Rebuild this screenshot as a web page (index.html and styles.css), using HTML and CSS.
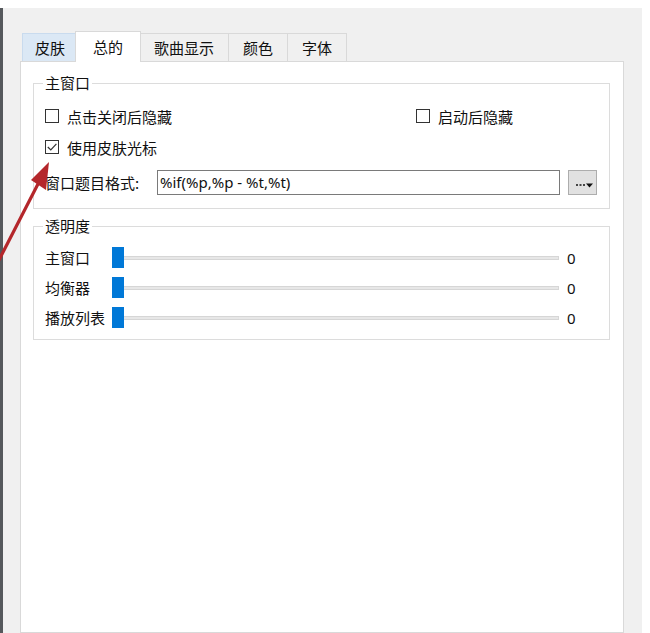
FILE: index.html
```html
<!DOCTYPE html>
<html lang="zh-CN">
<head>
  <meta charset="UTF-8">
  <meta name="viewport" content="width=device-width, initial-scale=1.0">
  <title>选项</title>
  <link rel="stylesheet" href="styles.css">
</head>
<body>

  <div class="window">
    <div class="tabs">
      <div class="tab hover">皮肤</div>
      <div class="tab active">总的</div>
      <div class="tab">歌曲显示</div>
      <div class="tab">颜色</div>
      <div class="tab">字体</div>
    </div>

    <div class="panel">
      <fieldset class="group">
        <legend>主窗口</legend>
        <div class="row check-row">
          <label class="check wide"><span class="box"></span>点击关闭后隐藏</label>
          <label class="check"><span class="box"></span>启动后隐藏</label>
        </div>
        <div class="row check-row second">
          <label class="check">
            <span class="box">
              <svg width="12" height="12" viewBox="0 0 12 12"><path d="M1.8 6 L4.8 9 L10.4 2.8" fill="none" stroke="#333" stroke-width="1.2"/></svg>
            </span>使用皮肤光标
          </label>
        </div>
        <div class="row format-row">
          <span class="field-label">窗口题目格式:</span>
          <div class="text-input">%if(%p,%p - %t,%t)</div>
          <div class="more-btn">
            <svg width="17" height="6" viewBox="0 0 17 6">
              <rect x="0" y="2" width="2" height="2" fill="#444"/>
              <rect x="3.5" y="2" width="2" height="2" fill="#444"/>
              <rect x="7" y="2" width="2" height="2" fill="#444"/>
              <path d="M10 1.5 H17 L13.5 5.5 Z" fill="#111"/>
            </svg>
          </div>
        </div>
      </fieldset>

      <fieldset class="group opacity">
        <legend>透明度</legend>
        <div class="row slider-row">
          <span class="slider-label">主窗口</span>
          <span class="thumb"></span>
          <span class="track"></span>
          <span class="value">0</span>
        </div>
        <div class="row slider-row">
          <span class="slider-label">均衡器</span>
          <span class="thumb"></span>
          <span class="track"></span>
          <span class="value">0</span>
        </div>
        <div class="row slider-row">
          <span class="slider-label">播放列表</span>
          <span class="thumb"></span>
          <span class="track"></span>
          <span class="value">0</span>
        </div>
      </fieldset>
    </div>
  </div>

  <!-- red pointer drawn over the dialog -->
  <svg class="arrow" width="60" height="270" viewBox="0 0 60 270">
    <line x1="-2" y1="262" x2="39" y2="182" stroke="#b4272b" stroke-width="3.2" stroke-linecap="round"/>
    <polygon points="49,162 31,180 46,190" fill="#b4272b"/>
  </svg>

</body>
</html>
```

FILE: styles.css
```css
body {
  margin: 0;
  background-color: #ffffff;
  font-family: "Noto Sans CJK SC", "Microsoft YaHei", sans-serif;
  font-size: 15px;
  color: #111;
}

.window {
  margin-top: 8px;
  width: 642px;
  height: 625px;
  box-sizing: border-box;
  background-color: #f0f0f0;
  border-left: 3px solid #55585c;
  padding: 25px 0 0 17px;
  display: flex;
  flex-direction: column;
}

/* tab strip */
.tabs {
  display: flex;
  align-items: flex-end;
  height: 28px;
  padding-left: 2px;
}

.tab {
  height: 28px;
  box-sizing: border-box;
  padding: 0 14px;
  border: 1px solid #d9d9d9;
  border-bottom: none;
  margin-right: -1px;
  background-color: #f0f0f0;
  display: flex;
  align-items: center;
  line-height: 1;
}

.tab.hover {
  background-color: #dbe8f5;
  border-color: #c9dbee;
  padding: 0 12px;
}

.tab.active {
  background-color: #ffffff;
  height: 31px;
  margin: 0 -2px -1px -2px;
  padding: 0 17px 2px;
  position: relative;
  z-index: 1;
}

.panel {
  flex: 1;
  background-color: #ffffff;
  border: 1px solid #d9d9d9;
  width: 604px;
  box-sizing: border-box;
}

/* group boxes */
.group {
  margin: 11px 13px 0 12px;
  padding: 11px 12px 13px 11px;
  border: 1px solid #dcdcdc;
  min-width: 0;
}

.group legend {
  padding: 0 2px;
  margin-left: -2px;
  line-height: 20px;
}

.group.opacity {
  margin-top: 7px;
  padding-top: 11px;
  padding-bottom: 11px;
}

.row {
  display: flex;
  align-items: center;
}

.check-row {
  height: 24px;
}

.check-row.second {
  margin-top: 7px;
}

.check {
  display: flex;
  align-items: center;
}

.check.wide {
  width: 371px;
}

.box {
  flex: none;
  width: 14px;
  height: 14px;
  border: 1px solid #333;
  box-sizing: border-box;
  margin-right: 8px;
  display: flex;
  align-items: center;
  justify-content: center;
}

.box svg {
  flex: none;
}

.format-row {
  margin-top: 11px;
  height: 25px;
}

.field-label {
  width: 112px;
}

.text-input {
  width: 403px;
  height: 25px;
  box-sizing: border-box;
  border: 1px solid #7a7a7a;
  padding: 0 2px;
  font-family: "Noto Sans", "Open Sans", sans-serif;
  font-size: 15px;
  line-height: 22px;
}

.more-btn {
  width: 29px;
  height: 25px;
  box-sizing: border-box;
  margin-left: 8px;
  background-color: #e1e1e1;
  border: 1px solid #adadad;
  display: flex;
  align-items: flex-end;
  justify-content: center;
  padding: 0 0 6px 3px;
}

/* sliders */
.slider-row {
  height: 21px;
}

.slider-row + .slider-row {
  margin-top: 9px;
}

.slider-label {
  width: 67px;
}

.thumb {
  width: 12px;
  height: 21px;
  background-color: #0078d7;
}

.track {
  width: 435px;
  height: 4px;
  background-color: #e7e7e7;
  border: 1px solid #d6d6d6;
  border-left: none;
  box-sizing: border-box;
}

.value {
  margin-left: 8px;
  font-family: "Noto Sans", sans-serif;
}

.arrow {
  position: absolute;
  left: 0;
  top: 0;
}
```
